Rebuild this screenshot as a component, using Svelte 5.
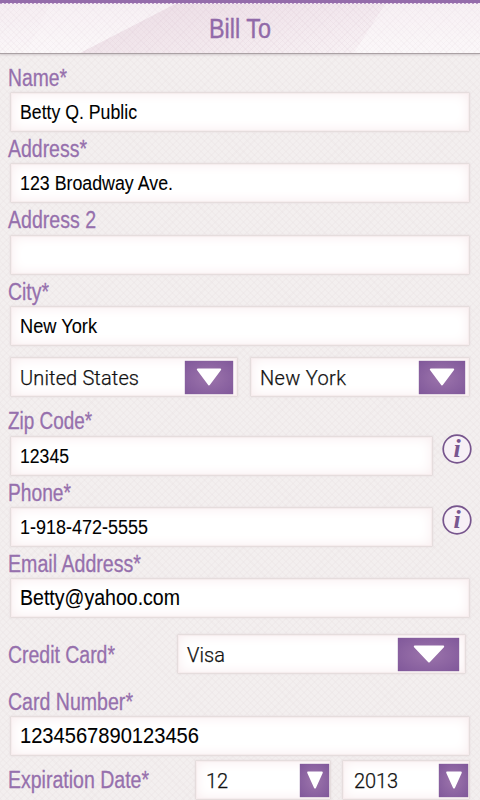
<script>
	const fields = [
		{ label: 'Name*', labelWidth: 59, value: 'Betty Q. Public', width: 117 },
		{ label: 'Address*', labelWidth: 79, value: '123 Broadway Ave.', width: 153 },
		{ label: 'Address 2', labelWidth: 88, value: '', width: 0 },
		{ label: 'City*', labelWidth: 41, value: 'New York', width: 77 }
	];

	const contact = [
		{ label: 'Zip Code*', labelWidth: 84, value: '12345', width: 49 },
		{ label: 'Phone*', labelWidth: 63, value: '1-918-472-5555', width: 128 }
	];
</script>

{#snippet narrow(text, width, kind)}
	<svg class={kind} width="300" height="40" aria-label={text}>
		{#if text}
			<text x="0" y="27" textLength={width} lengthAdjust="spacingAndGlyphs">{text}</text>
		{/if}
	</svg>
{/snippet}

{#snippet arrow(half)}
	<span class="arrow">
		<svg width="32" height="20" viewBox="-16 0 32 20">
			<path
				d="M{-half} 2.5H{half}L0 17.5Z"
				fill="#fff"
				stroke="#fff"
				stroke-width="2"
				stroke-linejoin="round"
			/>
		</svg>
	</span>
{/snippet}

{#snippet select(text, width, half, name)}
	<div class="box select {name}">
		<svg class="option" width="140" height="36">
			<text x="0" y="26.5" textLength={width} lengthAdjust="spacing">{text}</text>
		</svg>
		{@render arrow(half)}
	</div>
{/snippet}

<div class="page">
	<header>
		<svg class="rays" width="480" height="53">
			<defs>
				<linearGradient id="shade">
					<stop offset="0" stop-color="#dcc2d0" stop-opacity=".32" />
					<stop offset=".35" stop-color="#dcc2d0" stop-opacity=".24" />
					<stop offset="1" stop-color="#dcc2d0" stop-opacity=".04" />
				</linearGradient>
			</defs>
			<path d="M0 4H50L26 53H0Z" fill="#fff" opacity=".2" />
			<path d="M175 4H385L354 53H80Z" fill="url(#shade)" />
			<path d="M50 4H175L80 53H26Z" fill="#fff" opacity=".3" />
			<path d="M385 4H480V53H354Z" fill="#fff" opacity=".3" />
		</svg>
		<h1>{@render narrow('Bill To', 62, 'title')}</h1>
	</header>

	<main>
		{#each fields as field}
			<div class="label">{@render narrow(field.label, field.labelWidth, 'caption')}</div>
			<div class="box">{@render narrow(field.value, field.width, 'value')}</div>
		{/each}

		<div class="row region">
			{@render select('United States', 119, 11.2, 'country')}
			{@render select('New York', 86, 11.2, 'state')}
		</div>

		<div class="contact">
			{#each contact as field}
				<div class="label">{@render narrow(field.label, field.labelWidth, 'caption')}</div>
				<div class="row">
					<div class="box short">{@render narrow(field.value, field.width, 'value')}</div>
					<svg class="info" width="32" height="32" viewBox="0 0 32 32">
						<circle cx="16" cy="16" r="13.8" fill="#f7f0f6" stroke="#77558d" stroke-width="1.7" />
						<text x="16" y="24" text-anchor="middle">i</text>
					</svg>
				</div>
			{/each}
		</div>

		<div class="label">{@render narrow('Email Address*', 133, 'caption')}</div>
		<div class="box">{@render narrow('Betty@yahoo.com', 160, 'value large')}</div>

		<div class="row card">
			<div class="label">{@render narrow('Credit Card*', 107, 'caption')}</div>
			{@render select('Visa', 38, 14.2, 'brand')}
		</div>

		<div class="label number">{@render narrow('Card Number*', 125, 'caption')}</div>
		<div class="box">{@render narrow('1234567890123456', 179, 'value large')}</div>

		<div class="row expiry">
			<div class="label">{@render narrow('Expiration Date*', 141, 'caption')}</div>
			{@render select('12', 22, 6.8, 'month')}
			{@render select('2013', 44, 6.8, 'year')}
		</div>
	</main>
</div>

<style>
	:global(body) {
		background: #f1ecec;
	}

	.page {
		box-sizing: border-box;
		width: 480px;
		height: 800px;
		overflow: hidden;
		background:
			repeating-linear-gradient(45deg, rgba(226, 216, 218, 0.16) 0 1.5px, transparent 1.5px 5px),
			repeating-linear-gradient(-45deg, rgba(226, 216, 218, 0.16) 0 1.5px, transparent 1.5px 5px),
			#f3efef;
	}

	header {
		position: relative;
		box-sizing: border-box;
		height: 53px;
		border-top: 3px solid #946caa;
		background:
			repeating-linear-gradient(90deg, #b997c7 0 2px, #f4eaf3 2px 4px) 0 0 / 100% 1px no-repeat,
			repeating-linear-gradient(45deg, rgba(205, 180, 195, 0.1) 0 1px, transparent 1px 4px),
			repeating-linear-gradient(-45deg, rgba(205, 180, 195, 0.1) 0 1px, transparent 1px 4px),
			linear-gradient(#f3e9ef, #faf5f7);
		box-shadow:
			0 1px 0 #aaa1a4,
			0 2px 2px #cfc8ca;
	}

	.rays {
		position: absolute;
		top: -3px;
		left: 0;
	}

	h1 {
		position: relative;
		margin: 0;
		padding: 8px 0 0 209px;
		height: 40px;
	}

	svg {
		display: block;
		flex: none;
		overflow: visible;
	}

	.title,
	.caption,
	.value {
		font-family: 'Liberation Sans Narrow', 'Liberation Sans', sans-serif;
	}

	.title {
		font-size: 27px;
		font-weight: 400;
		fill: #916aa9;
		stroke: #916aa9;
		stroke-width: 0.4px;
	}

	.caption {
		height: 31px;
		font-size: 23px;
		fill: #9670ad;
		stroke: #9670ad;
		stroke-width: 0.3px;
		transform: translateY(-2.5px);
	}

	.value {
		margin-left: 9px;
		font-size: 20.5px;
		fill: #000;
		stroke: #000;
		stroke-width: 0.1px;
		transform: translateY(-0.7px);
	}

	.large {
		font-size: 21.5px;
	}

	main {
		padding: 7.7px 10px 0;
	}

	.label {
		height: 31.3px;
		margin-left: -2px;
	}

	.box {
		box-sizing: border-box;
		flex: none;
		height: 40px;
		border: 1px solid #e5dddd;
		border-radius: 1px;
		background: #fff;
		box-shadow:
			inset 0 0 13px #f8ebed,
			inset 0 0 1px 1px #f3eeee,
			0 0 1px 1px rgba(226, 216, 218, 0.25);
	}

	.row {
		display: flex;
	}

	.region {
		justify-content: space-between;
		margin-top: 11px;
	}

	.select {
		display: flex;
		justify-content: space-between;
		align-items: flex-start;
		height: 40.5px;
	}

	.option {
		width: 60px;
		height: 36px;
		margin-left: 9px;
		font-family: Roboto, sans-serif;
		font-size: 20px;
		font-weight: 300;
		fill: #111;
		stroke: #111;
		stroke-width: 0.25px;
	}

	.arrow {
		box-sizing: border-box;
		display: flex;
		flex: none;
		align-items: center;
		justify-content: center;
		width: 48px;
		height: 33px;
		margin: 3px 4px 0 0;
		background: radial-gradient(ellipse, #9870a9 15%, #80589a 100%);
		box-shadow: 0 0 1px #70508a;
	}

	.country {
		width: 228px;
	}

	.state {
		width: 220px;
	}

	.state .arrow {
		width: 46px;
	}

	.contact {
		padding-top: 7px;
	}

	.short {
		width: 423px;
	}

	.info {
		margin: -3px 0 0 8px;
	}

	.info text {
		font-family: 'Liberation Serif', serif;
		font-size: 26px;
		font-style: italic;
		font-weight: 700;
		fill: #795690;
	}

	.card {
		margin-top: 15.5px;
	}

	.card .label {
		width: 169px;
		padding-top: 4px;
	}

	.brand {
		width: 289px;
	}

	.brand .arrow {
		width: 61px;
		margin-right: 6px;
	}

	.number {
		margin-top: 10.5px;
	}

	.expiry {
		margin-top: 3.5px;
	}

	.expiry .label {
		width: 187px;
		padding-top: 3.5px;
	}

	.month {
		width: 136px;
		margin-right: 11px;
	}

	.year {
		width: 128px;
	}

	.month .arrow,
	.year .arrow {
		width: 29px;
		margin-right: 1px;
	}

	.month .option {
		margin-left: 10px;
	}

	.year .option {
		margin-left: 11px;
	}
</style>
